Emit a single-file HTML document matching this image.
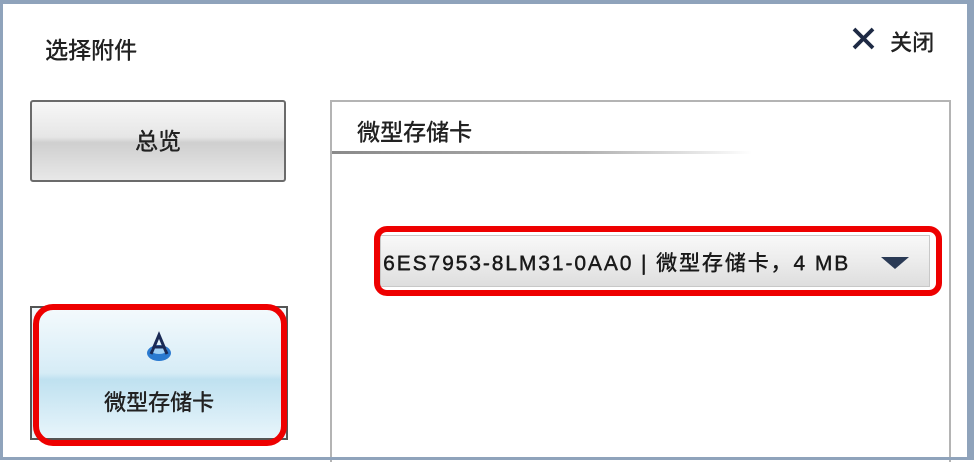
<!DOCTYPE html>
<html><head><meta charset="utf-8"><style>
*{margin:0;padding:0;box-sizing:border-box}
body{width:974px;height:460px;overflow:hidden;background:#fff;font-family:"Liberation Sans","Noto Sans CJK SC",sans-serif;position:relative;color:#222}
.frame{position:absolute;left:0;top:0;width:974px;height:460px;border:3px solid #8fa3bb;border-right-width:7px;border-top-width:4px;z-index:5}
.a{position:absolute}
.t{text-shadow:0.4px 0 0 #222,0 0.3px 0 #222}
</style></head><body>
<div class="frame"></div>
<div class="a t" style="left:45px;top:31px;font-size:23px;">选择附件</div>
<svg class="a" style="left:851px;top:27px" width="25" height="23" viewBox="0 0 25 23"><path d="M3 2 L22 21 M22 2 L3 21" stroke="#1e2a44" stroke-width="3.8"/></svg>
<div class="a t" style="left:890px;top:25px;font-size:22px;">关闭</div>
<div class="a" style="left:30px;top:100px;width:256px;height:82px;border:2px solid #6b6b6b;border-radius:3px;background:linear-gradient(#f7f7f7,#e6e6e6 45%,#cfcfcf 52%,#e8e8e8);"></div>
<div class="a t" style="left:30px;top:122px;width:256px;text-align:center;font-size:23px;">总览</div>
<div class="a" style="left:330px;top:100px;width:621px;height:362px;border:2px solid #b4b4b4;border-bottom:none"></div>
<div class="a t" style="left:357px;top:113px;font-size:23px;">微型存储卡</div>
<div class="a" style="left:332px;top:151px;width:420px;height:3px;background:linear-gradient(90deg,#8a8a8a,#b0b0b0 60%,rgba(255,255,255,0))"></div>
<div class="a" style="left:380px;top:235px;width:550px;height:52px;border:1px solid #c8c8c8;background:linear-gradient(#f8f8f8,#ececec 50%,#dedede);"></div>
<div class="a t" style="left:383px;top:247px;font-size:21px;color:#1a1a1a;white-space:nowrap;letter-spacing:1.9px">6ES7953-8LM31-0AA0 | 微型存储卡，4 MB</div>
<svg class="a" style="left:880px;top:256px" width="30" height="14"><path d="M1 1 L29 1 L15 13Z" fill="#2a3a55"/></svg>
<div class="a" style="left:374px;top:226px;width:568px;height:70px;border:6px solid #ee0000;border-radius:13px;"></div>
<div class="a" style="left:30px;top:306px;width:258px;height:134px;border:2px solid #555;background:linear-gradient(#f4fafd,#d6ecf6 50%,#bfe1f0 55%,#e8f5fb);"></div>
<svg class="a" style="left:141px;top:331px" width="36" height="34" viewBox="0 0 36 34"><ellipse cx="18" cy="22" rx="12" ry="8" fill="#2a7ad0"/><ellipse cx="18" cy="19" rx="8" ry="4" fill="#9fd0f5"/><path d="M10 23 L18 4 L26 23 M12.5 16 L23.5 16" stroke="#1a2a55" stroke-width="3" fill="none"/></svg>
<div class="a t" style="left:30px;top:385px;width:258px;text-align:center;font-size:22px;">微型存储卡</div>
<div class="a" style="left:33px;top:304px;width:254px;height:142px;border:6px solid #ee0000;border-radius:20px;"></div>
</body></html>
